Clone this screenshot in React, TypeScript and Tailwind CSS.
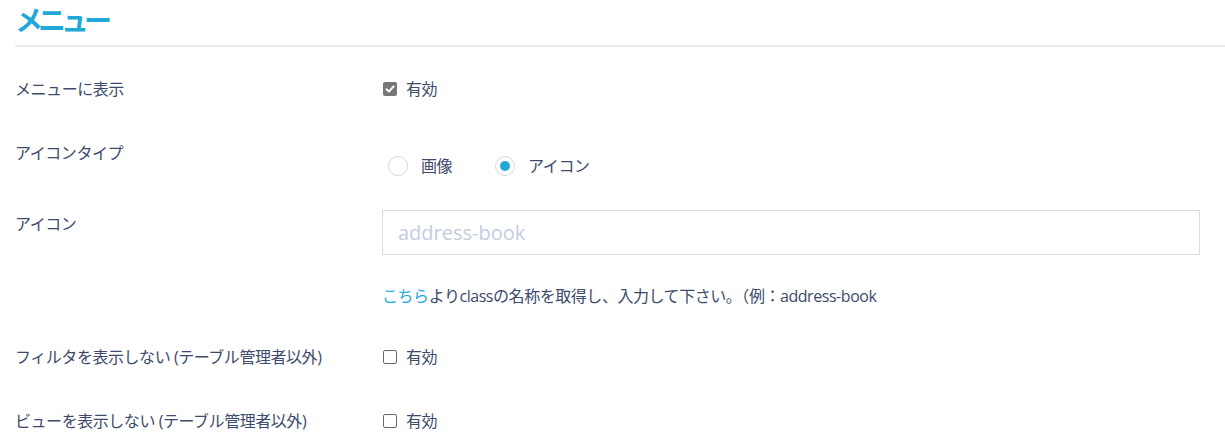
import React from 'react';

const font = { fontFamily: '"Open Sans", "Noto Sans CJK JP", sans-serif' };

const Check = ({ checked }: { checked?: boolean }) =>
  checked ? (
    <span className="w-[14px] h-[14px] rounded-[2px] bg-[#777] flex items-center justify-center shrink-0">
      <svg width="10" height="10" viewBox="0 0 10 10">
        <path d="M1.5 5.2 L4 7.6 L8.6 2.4" stroke="#fff" strokeWidth="2" fill="none" strokeLinecap="round" strokeLinejoin="round" />
      </svg>
    </span>
  ) : (
    <span className="w-[14px] h-[14px] rounded-[2px] border border-[#6a6a6a] bg-white shrink-0" />
  );

const Radio = ({ checked }: { checked?: boolean }) => (
  <span className="w-[20px] h-[20px] rounded-full border border-[#d8d8d8] bg-white flex items-center justify-center shrink-0">
    {checked && <span className="w-[10px] h-[10px] rounded-full bg-[#1fa8d8]" />}
  </span>
);

const CheckField = ({ checked }: { checked?: boolean }) => (
  <div className="flex items-center gap-[9px] h-6 pl-[1px]">
    <Check checked={checked} />
    <span>有効</span>
  </div>
);

export default function App() {
  return (
    <div className="w-[1225px] h-[447px] bg-white overflow-hidden pl-[15px] text-[16px] leading-6 tracking-[-0.45px] text-[#3d4a6b]" style={font}>
      <div className="h-[47px] border-b-2 border-[#ececec] flex items-start pt-[2px]">
        <h1 className="text-[28px] leading-9 font-bold tracking-[-5px] text-[#1fa8d8]">メニュー</h1>
      </div>

      <div className="flex items-start h-[64px] mt-[30px]">
        <div className="w-[367px] shrink-0">メニューに表示</div>
        <CheckField checked />
      </div>

      <div className="flex items-start h-[71px]">
        <div className="w-[367px] shrink-0">アイコンタイプ</div>
        <div className="flex items-center mt-[13px] pl-[6px]">
          <label className="flex items-center gap-[13px]">
            <Radio />
            <span>画像</span>
          </label>
          <label className="flex items-center gap-[13px] ml-[43px]">
            <Radio checked />
            <span>アイコン</span>
          </label>
        </div>
      </div>

      <div className="flex items-start">
        <div className="w-[367px] shrink-0">アイコン</div>
        <div className="flex flex-col -mt-[2px] w-[818px]">
          <div className="h-[45px] border border-[#dcdcdc] flex items-center px-[15px] text-[20px] tracking-normal text-[#c3cde0]">
            address-book
          </div>
          <div className="mt-[29px]">
            <span className="text-[#1fa8d8]">こちら</span>よりclassの名称を取得し、入力して下さい。（例：address-book
          </div>
        </div>
      </div>

      <div className="flex items-start h-[64px] mt-[37px]">
        <div className="w-[367px] shrink-0">フィルタを表示しない (テーブル管理者以外)</div>
        <CheckField />
      </div>

      <div className="flex items-start h-[38px]">
        <div className="w-[367px] shrink-0">ビューを表示しない (テーブル管理者以外)</div>
        <CheckField />
      </div>
    </div>
  );
}
